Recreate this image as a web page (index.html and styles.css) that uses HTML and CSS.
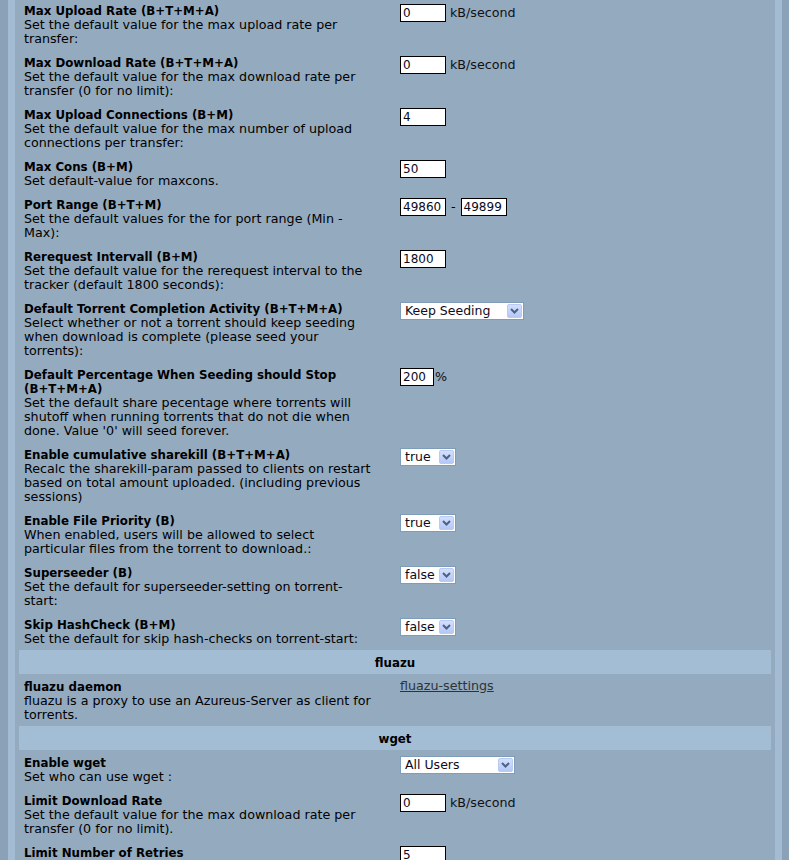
FILE: index.html
```html
<!DOCTYPE html>
<html>
<head>
<meta charset="utf-8">
<title>Settings</title>
<link rel="stylesheet" href="styles.css">
</head>
<body>
<div class="frame">
<div class="panel">
<table class="settings">
<tr>
<td class="label"><div class="title">Max Upload Rate (B+T+M+A)</div><div class="desc">Set the default value for the max upload rate per transfer:</div></td>
<td class="ctrl"><div class="row"><span class="txt w46">0</span><span class="unit">kB/second</span></div></td>
</tr>
<tr>
<td class="label"><div class="title">Max Download Rate (B+T+M+A)</div><div class="desc">Set the default value for the max download rate per transfer (0 for no limit):</div></td>
<td class="ctrl"><div class="row"><span class="txt w46">0</span><span class="unit">kB/second</span></div></td>
</tr>
<tr>
<td class="label"><div class="title">Max Upload Connections (B+M)</div><div class="desc">Set the default value for the max number of upload connections per transfer:</div></td>
<td class="ctrl"><div class="row"><span class="txt w46">4</span></div></td>
</tr>
<tr>
<td class="label"><div class="title">Max Cons (B+M)</div><div class="desc">Set default-value for maxcons.</div></td>
<td class="ctrl"><div class="row"><span class="txt w46">50</span></div></td>
</tr>
<tr>
<td class="label"><div class="title">Port Range (B+T+M)</div><div class="desc">Set the default values for the for port range (Min - Max):</div></td>
<td class="ctrl"><div class="row"><span class="txt w46">49860</span><span class="dash">-</span><span class="txt w46">49899</span></div></td>
</tr>
<tr>
<td class="label"><div class="title">Rerequest Intervall (B+M)</div><div class="desc">Set the default value for the rerequest interval to the tracker (default 1800 seconds):</div></td>
<td class="ctrl"><div class="row"><span class="txt w46">1800</span></div></td>
</tr>
<tr>
<td class="label"><div class="title">Default Torrent Completion Activity (B+T+M+A)</div><div class="desc">Select whether or not a torrent should keep seeding when download is complete (please seed your torrents):</div></td>
<td class="ctrl"><div class="row"><span class="sel w124"><span class="val">Keep Seeding</span><span class="btn"><svg width="9" height="6" viewBox="0 0 9 6"><path d="M1 1 L4.5 4.5 L8 1" fill="none" stroke="#4d6185" stroke-width="2"/></svg></span></span></div></td>
</tr>
<tr>
<td class="label"><div class="title">Default Percentage When Seeding should Stop (B+T+M+A)</div><div class="desc">Set the default share pecentage where torrents will shutoff when running torrents that do not die when done. Value '0' will seed forever.</div></td>
<td class="ctrl"><div class="row"><span class="txt w34">200</span><span class="pct">%</span></div></td>
</tr>
<tr>
<td class="label"><div class="title">Enable cumulative sharekill (B+T+M+A)</div><div class="desc">Recalc the sharekill-param passed to clients on restart based on total amount uploaded. (including previous sessions)</div></td>
<td class="ctrl"><div class="row"><span class="sel w56"><span class="val">true</span><span class="btn"><svg width="9" height="6" viewBox="0 0 9 6"><path d="M1 1 L4.5 4.5 L8 1" fill="none" stroke="#4d6185" stroke-width="2"/></svg></span></span></div></td>
</tr>
<tr>
<td class="label"><div class="title">Enable File Priority (B)</div><div class="desc">When enabled, users will be allowed to select particular files from the torrent to download.:</div></td>
<td class="ctrl"><div class="row"><span class="sel w56"><span class="val">true</span><span class="btn"><svg width="9" height="6" viewBox="0 0 9 6"><path d="M1 1 L4.5 4.5 L8 1" fill="none" stroke="#4d6185" stroke-width="2"/></svg></span></span></div></td>
</tr>
<tr>
<td class="label"><div class="title">Superseeder (B)</div><div class="desc">Set the default for superseeder-setting on torrent-start:</div></td>
<td class="ctrl"><div class="row"><span class="sel w56"><span class="val">false</span><span class="btn"><svg width="9" height="6" viewBox="0 0 9 6"><path d="M1 1 L4.5 4.5 L8 1" fill="none" stroke="#4d6185" stroke-width="2"/></svg></span></span></div></td>
</tr>
<tr>
<td class="label"><div class="title">Skip HashCheck (B+M)</div><div class="desc">Set the default for skip hash-checks on torrent-start:</div></td>
<td class="ctrl"><div class="row"><span class="sel w56"><span class="val">false</span><span class="btn"><svg width="9" height="6" viewBox="0 0 9 6"><path d="M1 1 L4.5 4.5 L8 1" fill="none" stroke="#4d6185" stroke-width="2"/></svg></span></span></div></td>
</tr>
<tr>
<th class="section" colspan="2">fluazu</th>
</tr>
<tr>
<td class="label"><div class="title">fluazu daemon</div><div class="desc">fluazu is a proxy to use an Azureus-Server as client for torrents.</div></td>
<td class="ctrl"><a class="link" href="#">fluazu-settings</a></td>
</tr>
<tr>
<th class="section" colspan="2">wget</th>
</tr>
<tr>
<td class="label"><div class="title">Enable wget</div><div class="desc">Set who can use wget :</div></td>
<td class="ctrl"><div class="row"><span class="sel w115"><span class="val">All Users</span><span class="btn"><svg width="9" height="6" viewBox="0 0 9 6"><path d="M1 1 L4.5 4.5 L8 1" fill="none" stroke="#4d6185" stroke-width="2"/></svg></span></span></div></td>
</tr>
<tr>
<td class="label"><div class="title">Limit Download Rate</div><div class="desc">Set the default value for the max download rate per transfer (0 for no limit).</div></td>
<td class="ctrl"><div class="row"><span class="txt w46">0</span><span class="unit">kB/second</span></div></td>
</tr>
<tr>
<td class="label"><div class="title">Limit Number of Retries</div><div class="desc">Set the default value for the number of retries wget makes per transfer.</div></td>
<td class="ctrl"><div class="row"><span class="txt w46">5</span></div></td>
</tr>
</table>
</div>
</div>
</body>
</html>
```
FILE: styles.css
```css
html {
  overflow: hidden;
}
body {
  margin: 0;
  background: #8aa1b7;
  font-family: "DejaVu Sans", Verdana, sans-serif;
  font-size: 12.7px;
  line-height: 14px;
  color: #000;
}
.frame {
  margin: 0 7px 0 8px;
  padding: 0 7px;
  background: #a3bcd3;
  min-height: 900px;
}
.panel {
  background: #94aabf;
  padding: 0 4px;
  min-height: 900px;
}
.settings {
  width: 100%;
  border-collapse: collapse;
  table-layout: fixed;
  margin-top: -2px;
}
.settings td {
  box-sizing: border-box;
  padding: 5px;
  vertical-align: top;
  width: 50%;
}
.settings td.label {
  padding: 6px 20px 4px 5px;
}
.title {
  font-weight: bold;
  font-size: 11.8px;
}
.section {
  background: #a3bdd5;
  padding: 6px 5px 4px;
  text-align: center;
  font-weight: bold;
  font-size: 11.8px;
}
.row {
  display: flex;
  align-items: center;
  margin-top: 1px;
}
.txt {
  box-sizing: border-box;
  height: 18px;
  border: 1px solid #000;
  background: #fff;
  padding: 0 2px;
  font-size: 12px;
  line-height: 16px;
  color: #0a0a1e;
  white-space: nowrap;
}
.w46 { width: 46px; }
.w34 { width: 34px; }
.unit {
  margin-left: 4px;
  color: #111;
}
.pct {
  margin-left: 1px;
  color: #111;
}
.dash {
  margin: 0 5px;
}
.sel {
  box-sizing: border-box;
  display: flex;
  align-items: center;
  height: 18px;
  border: 1px solid #7f9db9;
  background: #fff;
  padding: 1px;
}
.w124 { width: 124px; }
.w56 { width: 56px; }
.w115 { width: 115px; }
.val {
  flex: 1;
  padding-left: 3px;
  font-size: 12.5px;
  line-height: 14px;
  color: #100a1a;
  white-space: nowrap;
}
.btn {
  box-sizing: border-box;
  width: 15px;
  height: 14px;
  border: 1px solid #b9cbf3;
  border-radius: 2px;
  background: linear-gradient(#d3dffd, #b4c8f6);
  display: flex;
  align-items: center;
  justify-content: center;
}
.btn svg {
  display: block;
}
.link {
  color: #2e3338;
  text-decoration: underline;
}
```
